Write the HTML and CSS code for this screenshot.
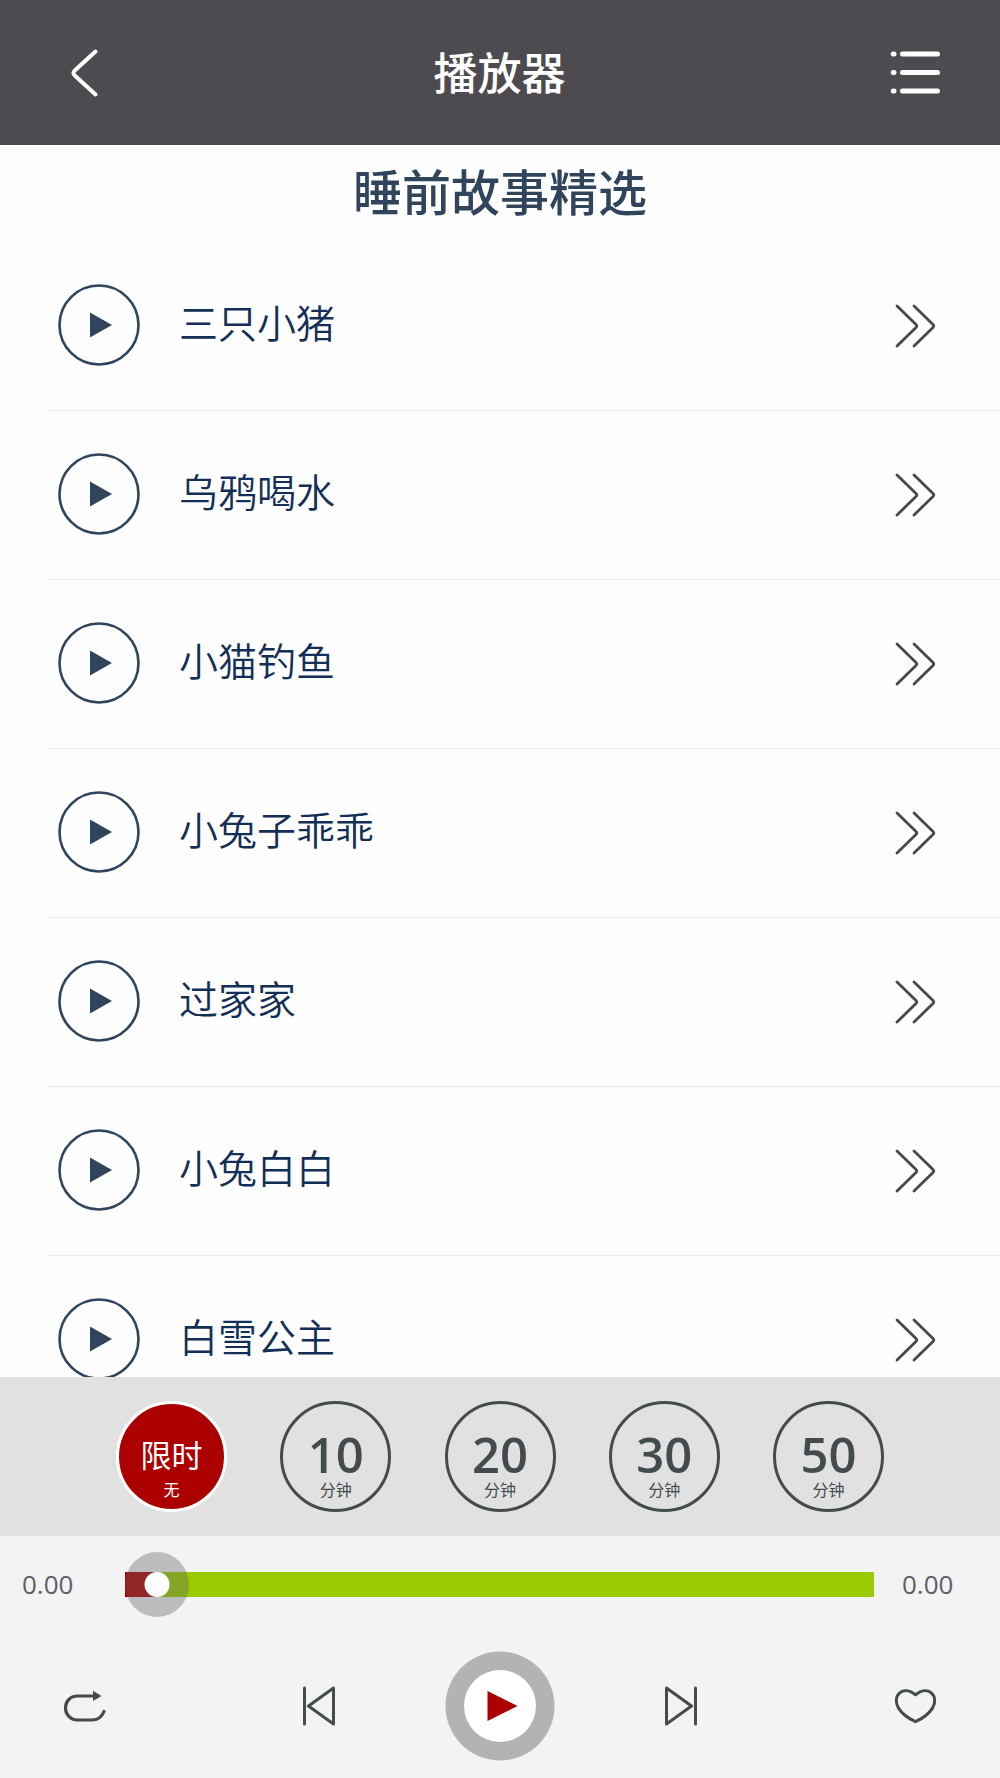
FILE: index.html
```html
<!DOCTYPE html>
<html lang="zh-CN">
<head>
<meta charset="utf-8">
<meta name="viewport" content="width=device-width, initial-scale=1">
<title>播放器</title>
<link rel="stylesheet" href="styles.css">
</head>
<body>
<svg class="defs" aria-hidden="true">
  <symbol id="play" viewBox="0 0 82 82">
    <circle cx="41" cy="41" r="39.5" fill="none" stroke="currentColor" stroke-width="2.6"/>
    <path d="M32 28.500 54 41 32 53.500z" fill="currentColor"/>
  </symbol>
  <symbol id="more" viewBox="0 0 44 44">
    <path d="M3 2 22 20.500q1.500 1.500 0 3L3 42M20 2 39 20.500q1.500 1.500 0 3L20 42" fill="none" stroke="currentColor" stroke-width="2.800" stroke-linecap="round"/>
  </symbol>
</svg>

<header class="topbar">
  <button class="icon-btn" type="button" aria-label="返回">
    <svg width="28" height="48" viewBox="0 0 28 48"><path d="M24.500 2.500 3.500 21.800q-2.200 2.200 0 4.400L24.500 45.500" fill="none" stroke="currentColor" stroke-width="4" stroke-linecap="round"/></svg>
  </button>
  <h1 class="topbar-title">播放器</h1>
  <button class="icon-btn" type="button" aria-label="菜单">
    <svg width="50" height="44" viewBox="0 0 50 44"><path d="M3.200 3h.8M3.200 21.500h.8M3.200 40h.8M12.500 3h35M12.500 21.500h35M12.500 40h35" fill="none" stroke="currentColor" stroke-width="5" stroke-linecap="round"/></svg>
  </button>
</header>

<main class="stories">
  <h2 class="stories-title">睡前故事精选</h2>
  <ul class="story-list">
    <li class="story"><button class="icon-btn story-play" type="button" aria-label="播放 三只小猪"><svg width="82" height="82"><use href="#play"/></svg></button><span class="story-name">三只小猪</span><a class="story-more" href="#s1" aria-label="详情"><svg width="44" height="44"><use href="#more"/></svg></a></li>
    <li class="story"><button class="icon-btn story-play" type="button" aria-label="播放 乌鸦喝水"><svg width="82" height="82"><use href="#play"/></svg></button><span class="story-name">乌鸦喝水</span><a class="story-more" href="#s2" aria-label="详情"><svg width="44" height="44"><use href="#more"/></svg></a></li>
    <li class="story"><button class="icon-btn story-play" type="button" aria-label="播放 小猫钓鱼"><svg width="82" height="82"><use href="#play"/></svg></button><span class="story-name">小猫钓鱼</span><a class="story-more" href="#s3" aria-label="详情"><svg width="44" height="44"><use href="#more"/></svg></a></li>
    <li class="story"><button class="icon-btn story-play" type="button" aria-label="播放 小兔子乖乖"><svg width="82" height="82"><use href="#play"/></svg></button><span class="story-name">小兔子乖乖</span><a class="story-more" href="#s4" aria-label="详情"><svg width="44" height="44"><use href="#more"/></svg></a></li>
    <li class="story"><button class="icon-btn story-play" type="button" aria-label="播放 过家家"><svg width="82" height="82"><use href="#play"/></svg></button><span class="story-name">过家家</span><a class="story-more" href="#s5" aria-label="详情"><svg width="44" height="44"><use href="#more"/></svg></a></li>
    <li class="story"><button class="icon-btn story-play" type="button" aria-label="播放 小兔白白"><svg width="82" height="82"><use href="#play"/></svg></button><span class="story-name">小兔白白</span><a class="story-more" href="#s6" aria-label="详情"><svg width="44" height="44"><use href="#more"/></svg></a></li>
    <li class="story"><button class="icon-btn story-play" type="button" aria-label="播放 白雪公主"><svg width="82" height="82"><use href="#play"/></svg></button><span class="story-name">白雪公主</span><a class="story-more" href="#s7" aria-label="详情"><svg width="44" height="44"><use href="#more"/></svg></a></li>
  </ul>
</main>

<section class="timers" aria-label="定时">
  <button class="timer timer-active" type="button"><span class="timer-label">限时</span><span class="timer-unit">无</span></button>
  <button class="timer" type="button"><span class="timer-value">10</span><span class="timer-unit">分钟</span></button>
  <button class="timer" type="button"><span class="timer-value">20</span><span class="timer-unit">分钟</span></button>
  <button class="timer" type="button"><span class="timer-value">30</span><span class="timer-unit">分钟</span></button>
  <button class="timer" type="button"><span class="timer-value">50</span><span class="timer-unit">分钟</span></button>
</section>

<footer class="player">
  <div class="progress">
    <span class="time">0.00</span>
    <input class="seek" type="range" min="0" max="100" value="0" aria-label="播放进度">
    <span class="time">0.00</span>
  </div>
  <div class="controls">
    <button class="icon-btn" type="button" aria-label="循环">
      <svg width="44" height="34" viewBox="0 0 44 34"><path d="M31 7H14.500C7 7 2.500 12.500 2.500 19S7.500 31 14 31H29C35 31 39 27.500 41 22.500" fill="none" stroke="currentColor" stroke-width="3.200" stroke-linecap="round"/><path d="M30 1.700 38.500 7 30 12z" fill="currentColor"/></svg>
    </button>
    <div class="transport">
      <button class="icon-btn" type="button" aria-label="上一首">
        <svg width="32" height="40" viewBox="0 0 32 40"><path d="M1.500 2v36M30.500 2 5.500 20l25 18z" fill="none" stroke="currentColor" stroke-width="3" stroke-linecap="round" stroke-linejoin="round"/></svg>
      </button>
      <button class="icon-btn" type="button" aria-label="播放">
        <svg width="110" height="110" viewBox="0 0 110 110"><circle cx="55" cy="55" r="54.500" fill="#b3b3b3"/><circle cx="55" cy="55" r="36" fill="#fff"/><path d="M42.500 40 72.500 55 42.500 70z" fill="#ac0000"/></svg>
      </button>
      <button class="icon-btn" type="button" aria-label="下一首">
        <svg width="32" height="40" viewBox="0 0 32 40"><path d="M30.500 2v36M1.500 2 26.500 20l-25 18z" fill="none" stroke="currentColor" stroke-width="3" stroke-linecap="round" stroke-linejoin="round"/></svg>
      </button>
    </div>
    <button class="icon-btn" type="button" aria-label="收藏">
      <svg width="44" height="36" viewBox="0 0 44 36"><path d="M22.500 6.700C16.500 2 10.500 1.700 6.700 4.900 2.500 8.500 2.300 15 5.500 20.100 9 25.700 15.500 30.500 22.500 33.700 29.500 30.500 36 25.700 39.500 20.100 42.700 15 42.500 8.500 38.300 4.900 34.500 1.700 28.500 2 22.500 6.700z" fill="none" stroke="currentColor" stroke-width="3" stroke-linejoin="round"/></svg>
    </button>
  </div>
</footer>
</body>
</html>
```

FILE: styles.css
```css
* {
  box-sizing: border-box;
}

body {
  margin: 0;
  height: 100vh;
  display: flex;
  flex-direction: column;
  background: #fefefe;
  color: #444b4e;
  font-family: "Noto Sans CJK SC", sans-serif;
}

svg {
  display: block;
}

.defs {
  display: none;
}

.icon-btn {
  padding: 0;
  border: 0;
  background: none;
  color: inherit;
  cursor: pointer;
}

.topbar {
  flex: none;
  height: 145px;
  padding: 0 60px 0 71px;
  display: grid;
  grid-template-columns: 50px 1fr 50px;
  align-items: center;
  background: #4d4b4f;
  color: #fff;
}

.topbar-title {
  margin: 0;
  padding: 0 12px 4px 0;
  text-align: center;
  font-size: 44px;
  line-height: 64px;
  font-weight: 500;
}

.stories {
  flex: 1;
  min-height: 0;
  overflow: hidden;
}

.stories-title {
  margin: 0;
  padding-bottom: 7px;
  text-align: center;
  font-size: 49px;
  line-height: 90px;
  font-weight: 500;
  color: #30455c;
}

.story-list {
  margin: 0;
  padding: 0 0 0 48px;
  list-style: none;
}

.story {
  height: 169px;
  padding: 0 62px 2px 10px;
  display: flex;
  align-items: center;
  border-bottom: 1px solid #ececee;
}

.story-play {
  color: #30455c;
}

.story-name {
  flex: 1;
  padding: 0 0 8px 39px;
  font-size: 39px;
  line-height: 56px;
  font-weight: 350;
  color: #142f57;
}

.story-more {
  padding-top: 2px;
  color: #444b4e;
}

.timers {
  flex: none;
  height: 159px;
  padding: 0 116px;
  display: flex;
  justify-content: space-between;
  align-items: center;
  background: #e1e1e1;
}

.timer {
  width: 111px;
  height: 111px;
  padding: 28px 0 0;
  display: flex;
  flex-direction: column;
  align-items: center;
  border: 3px solid #444b4e;
  border-radius: 50%;
  background: none;
  color: #444b4e;
  font-family: inherit;
  cursor: pointer;
}

.timer-active {
  border-color: #fff;
  background: #ac0000;
  color: #fff;
}

.timer-label,
.timer-value {
  line-height: 44px;
}

.timer-label {
  font-size: 31px;
}

.timer-value {
  font-family: "Open Sans", sans-serif;
  font-size: 49px;
  font-weight: 600;
}

.timer-unit {
  font-size: 16px;
  line-height: 26px;
}

.player {
  flex: none;
  padding: 16px 0 17px;
  background: #f3f3f3;
}

.progress {
  padding: 0 46px 0 22px;
  display: grid;
  grid-template-columns: 52px 1fr 52px;
  align-items: center;
}

.time {
  padding-bottom: 2px;
  font-family: "Open Sans", sans-serif;
  font-size: 26px;
  line-height: 32px;
  color: #5a6065;
}

.seek {
  -webkit-appearance: none;
  appearance: none;
  width: auto;
  height: 65px;
  margin: 0 28px 0 51px;
  background: none;
  cursor: pointer;
}

.seek::-webkit-slider-runnable-track {
  height: 25px;
  background: linear-gradient(to right, #ac0000 32px, #99cc00 32px);
}

.seek::-webkit-slider-thumb {
  -webkit-appearance: none;
  width: 64px;
  height: 65px;
  margin-top: -20px;
  border-radius: 50%;
  background: radial-gradient(circle, #fff 12px, rgba(100, 100, 100, 0.38) 13px);
}

.controls {
  padding: 34px 63px 0;
  display: flex;
  justify-content: space-between;
  align-items: center;
}

.transport {
  display: flex;
  align-items: center;
  gap: 110px;
}
```
